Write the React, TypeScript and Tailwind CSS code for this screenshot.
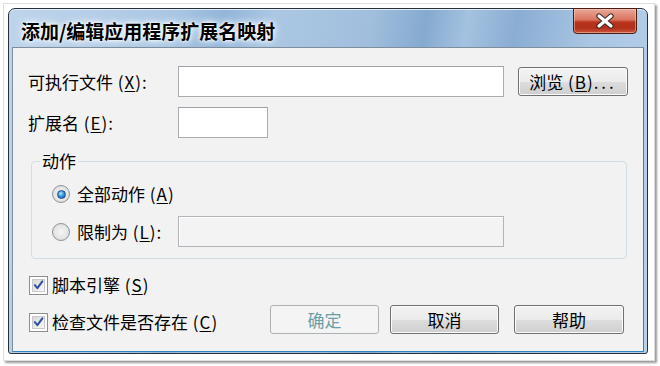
import React from "react";

const font = "font-['Noto_Sans_CJK_SC','Noto_Sans',sans-serif]";

function Mn({ k }: { k: string }) {
  return (
    <span className="tracking-[1px]">
      {" ("}
      <span className="underline underline-offset-2">{k}</span>
      {")"}
    </span>
  );
}

function TextBox({ w, h, disabled }: { w: string; h: string; disabled?: boolean }) {
  return (
    <div
      className={`${w} ${h} border ${
        disabled
          ? "border-[#b1b5ba] bg-[#f3f3f3] shadow-[inset_1px_1px_0_#fff]"
          : "border-[#a9adb2] border-t-[#9da2a8] bg-white"
      }`}
    />
  );
}

function Button({
  label,
  w,
  disabled,
  children,
}: {
  label?: string;
  w: string;
  disabled?: boolean;
  children?: React.ReactNode;
}) {
  return (
    <div
      className={`${w} h-[29px] rounded-[3px] border flex items-center justify-center text-[17px] leading-none ${
        disabled
          ? "border-[#adb2b5] bg-[#f4f4f4] text-[#6a9ea8]"
          : "border-[#707070] text-black bg-[linear-gradient(#f3f3f3_0%,#ebebeb_50%,#dddddd_51%,#cfcfcf_100%)] shadow-[inset_0_0_0_1px_#fbfbfb]"
      }`}
    >
      {children ?? label}
    </div>
  );
}

function Radio({ checked }: { checked?: boolean }) {
  return (
    <div className="w-[18px] h-[18px] rounded-full border border-[#8e9399] bg-[radial-gradient(circle_at_50%_50%,#f4f4f4_0%,#e6e6e6_55%,#cfcfcf_100%)] flex items-center justify-center shrink-0">
      {checked && (
        <div className="w-[9px] h-[9px] rounded-full border border-[#1b4c86] bg-[radial-gradient(circle_at_40%_35%,#b6e8ff_0%,#3d95d8_45%,#17589e_100%)]" />
      )}
    </div>
  );
}

function Check() {
  return (
    <div className="w-[19px] h-[19px] border border-[#8f8f8f] bg-white p-[2px] shrink-0">
      <div className="w-full h-full border border-[#c9c9c9] bg-[linear-gradient(135deg,#d8d8d8,#f8f8f8)] flex items-center justify-center">
        <svg width="12" height="12" viewBox="0 0 12 12">
          <path d="M2 6.2 L4.8 9.4 L10.2 2" fill="none" stroke="#2e4ea7" strokeWidth="2.2" strokeLinecap="round" strokeLinejoin="round" />
        </svg>
      </div>
    </div>
  );
}

export default function App() {
  return (
    <div className={`w-[660px] h-[366px] bg-white ${font}`}>
      <div className="ml-[3px] mt-[3px] w-[652px] h-[358px] border border-[#dedede] bg-white shadow-[2px_2px_2px_rgba(0,0,0,0.4)] pl-[4px] pt-[4px]">
        {/* window */}
        <div className="relative w-[640px] h-[346px] rounded-t-[7px] rounded-b-[3px] border border-[#25303b] bg-[linear-gradient(100deg,#bed4eb_0%,#b4cde7_14%,#a9c6e3_24%,#93b5d9_31%,#abc7e3_38%,#a1bfdd_52%,#85aad0_60%,#a4c2e0_66%,#8badd3_73%,#a9c6e3_84%,#b8d1ea_100%)] shadow-[inset_0_1px_0_#e4eef8] flex flex-col px-[3px] pb-[1px]">
          {/* title bar */}
          <div className="h-[38px] shrink-0 flex items-center pl-[9px] pt-[5px]">
            <span className="text-[19px] font-bold text-black leading-none [text-shadow:0_0_6px_#fff,0_0_3px_#fff,0_0_10px_#e8f2fb]">
              添加/编辑应用程序扩展名映射
            </span>
          </div>

          {/* close button */}
          <div className="absolute -top-[1px] right-[10px] w-[64px] h-[26px] rounded-b-[4px] border border-[#4b1c12] bg-[linear-gradient(#e9a898_0%,#d9735f_45%,#b8321d_55%,#b0301c_80%,#d0583f_100%)] shadow-[inset_0_0_0_1px_rgba(255,220,210,0.45)] flex items-center justify-center">
            <svg width="22" height="16" viewBox="0 0 22 16">
              <path d="M5 3 L17 13 M17 3 L5 13" stroke="#3a2a28" strokeWidth="5.4" strokeLinecap="round" />
              <path d="M5 3 L17 13 M17 3 L5 13" stroke="#ffffff" strokeWidth="3.2" strokeLinecap="round" />
            </svg>
          </div>

          {/* client area */}
          <div className="flex-1 border border-[#7f8e9c] border-r-[#2c83c6] border-b-[#2c83c6] bg-[#f2f2f2] pl-[15px] pt-[18px] text-[17px] text-black leading-[20px]">
            <div className="flex items-center h-[31px]">
              <div className="w-[150px]">
                可执行文件<Mn k="X" />:
              </div>
              <TextBox w="w-[326px]" h="h-[31px]" />
              <div className="ml-[14px]">
                <Button w="w-[110px]">
                  <span>
                    浏览<Mn k="B" />
                    <span className="tracking-[3px]">...</span>
                  </span>
                </Button>
              </div>
            </div>

            <div className="flex items-center h-[31px] mt-[10px]">
              <div className="w-[150px]">
                扩展名<Mn k="E" />:
              </div>
              <TextBox w="w-[90px]" h="h-[31px]" />
            </div>

            {/* group box */}
            <div className="relative ml-[3px] mt-[23px] w-[596px] h-[98px] rounded-[4px] border border-[#d3dde4] pl-[20px] pt-[22px]">
              <div className="absolute -top-[11px] left-[8px] px-[2px] bg-[#f2f2f2]">动作</div>
              <div className="flex items-center h-[20px] gap-[7px]">
                <Radio checked />
                <span>
                  全部动作<Mn k="A" />
                </span>
              </div>
              <div className="flex items-center h-[31px] mt-[12px]">
                <Radio />
                <div className="w-[101px] ml-[7px]">
                  限制为<Mn k="L" />:
                </div>
                <TextBox disabled w="w-[326px]" h="h-[31px]" />
              </div>
            </div>

            <div className="flex items-center h-[20px] mt-[16px] ml-[1px] gap-[4px]">
              <Check />
              <span>
                脚本引擎<Mn k="S" />
              </span>
            </div>

            <div className="flex items-start h-[29px] mt-[10px]">
              <div className="w-[242px] mt-[7px] flex items-center h-[20px] pl-[1px] gap-[4px]">
                <Check />
                <span>
                  检查文件是否存在<Mn k="C" />
                </span>
              </div>
              <Button label="确定" w="w-[109px]" disabled />
              <div className="ml-[11px]">
                <Button label="取消" w="w-[109px]" />
              </div>
              <div className="ml-[15px]">
                <Button label="帮助" w="w-[110px]" />
              </div>
            </div>
          </div>
        </div>
      </div>
    </div>
  );
}
